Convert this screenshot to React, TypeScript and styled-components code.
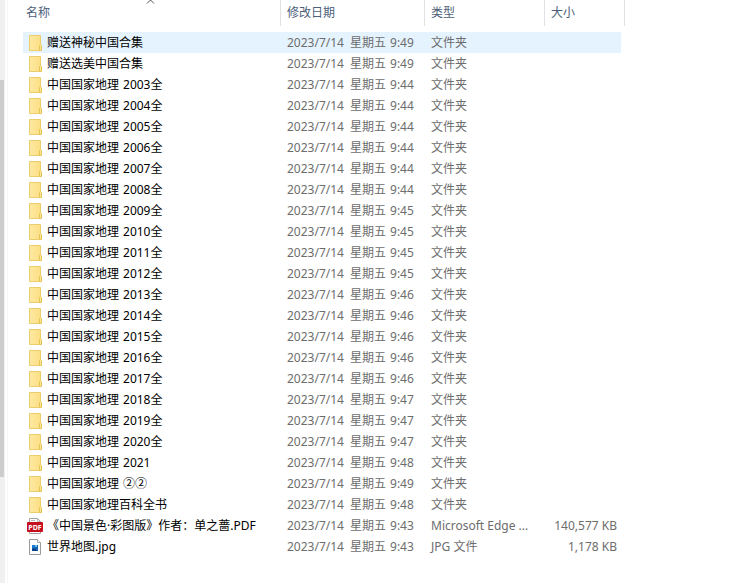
import React from "react";
import styled, { createGlobalStyle } from "styled-components";

const GlobalStyle = createGlobalStyle`
  * { box-sizing: border-box; }
  body {
    margin: 0;
    background: #fff;
    font-family: "Noto Sans", "Noto Sans CJK SC", sans-serif;
    font-size: 12px;
    line-height: 20px;
  }
`;

const Page = styled.div`
  display: flex;
  min-height: 100vh;
  overflow: hidden;
`;

const ScrollTrack = styled.div`
  flex: 0 0 5px;
  display: flex;
  flex-direction: column;
  padding-right: 1px;
  background: #f0f0f0;
`;

const TrackSpace = styled.div<{ $share: number }>`
  flex: ${(p) => p.$share} 0 0;
`;

const ScrollThumb = styled(TrackSpace)`
  background: #cdcdcd;
`;

const FilePane = styled.main`
  flex: 1;
  min-width: 0;
  margin-left: 2px;
  padding-left: 15px;
  border-left: 1px solid #f7f7f7;
`;

const FileTable = styled.table`
  width: 602px;
  table-layout: fixed;
  border-collapse: separate;
  border-spacing: 0;
`;

const Column = styled.col<{ $width: number }>`
  width: ${(p) => p.$width}px;
`;

const HeadCell = styled.th`
  position: relative;
  height: 32px;
  padding: 0;
  vertical-align: top;
  font-weight: 400;
`;

const HeadButton = styled.button<{ $indent: number }>`
  display: block;
  width: 100%;
  height: 26px;
  padding: 0 0 0 ${(p) => p.$indent}px;
  border: 0;
  border-right: 1px solid #e2e2e2;
  background: transparent;
  color: #4c607a;
  font: inherit;
  text-align: left;
`;

const SortMark = styled.svg`
  position: absolute;
  top: 0;
  left: 50%;
  margin-left: -6px;
`;

const Row = styled.tr<{ $active?: boolean }>`
  td {
    background-color: ${(p) => (p.$active ? "#e5f3ff" : "transparent")};
  }
`;

const Cell = styled.td`
  height: 21px;
  padding: 0 0 0 6px;
  color: #6d6d6d;
  white-space: nowrap;
`;

const NameCell = styled(Cell)`
  padding-left: 4px;
  color: #000;
`;

const SizeCell = styled(Cell)`
  padding-right: 4px;
  border-right: 4px solid transparent;
  background-clip: padding-box;
  text-align: right;
`;

const FileName = styled.div`
  display: flex;
  align-items: center;
  gap: 4px;
`;

const NameText = styled.span`
  display: flex;
  gap: 4px;
`;

const DateText = styled.time`
  display: flex;
  gap: 4px;
`;

const DayText = styled.span`
  flex: 0 0 59px;
`;

const FileIcon = styled.svg`
  flex: none;
`;

type Kind = "folder" | "pdf" | "jpg";

function Icon({ kind }: { kind: Kind }) {
  if (kind === "folder") {
    return (
      <FileIcon width="16" height="18" viewBox="0 0 16 18" aria-hidden="true">
        <defs>
          <linearGradient id="folderFill" x1="0" x2="1">
            <stop offset="0" stopColor="#ffe9a2" />
            <stop offset="1" stopColor="#fbdf85" />
          </linearGradient>
        </defs>
        <path d="M2.5 1.5h11v15h-11z" fill="url(#folderFill)" stroke="#ebcd6c" />
        <path d="M12.5 16.5v-5l1-1 1 1v5z" fill="#ffe795" stroke="#e6c353" />
      </FileIcon>
    );
  }
  if (kind === "pdf") {
    return (
      <FileIcon width="16" height="18" viewBox="0 0 16 18" aria-hidden="true">
        <path d="M2.5 1.5h8l3 3v12h-11z" fill="#fff" stroke="#a3a3a3" />
        <path d="M10.5 1.5v3h3M4 3.5h4" fill="none" stroke="#b8b8b8" />
        <rect y="5" width="16" height="10" rx="1" fill="#c50f1f" />
        <text
          x="8"
          y="13"
          textAnchor="middle"
          fontSize="7"
          fontWeight="700"
          fontFamily="Noto Sans, sans-serif"
          fill="#fff"
        >
          PDF
        </text>
      </FileIcon>
    );
  }
  return (
    <FileIcon width="16" height="18" viewBox="0 0 16 18" aria-hidden="true">
      <path d="M2.5 1.5h8l3 3v12h-11z" fill="#fcfcfc" stroke="#9a9a9a" />
      <path d="M10.5 1.5v3h3" fill="#fff" stroke="#ababab" />
      <rect x="5" y="7" width="6" height="6" fill="#1879d0" />
      <path d="M5 13v-2l2-1 4 3z" fill="#0b3f83" />
      <path d="M7 10l3-3h1v5z" fill="#1260ae" />
      <rect x="8" y="7" width="2" height="2" fill="#69c0f0" />
    </FileIcon>
  );
}

interface Entry {
  kind: Kind;
  name: string;
  suffix?: string;
  time: string;
  type: string;
  size?: string;
}

const folder = (name: string, time: string, suffix?: string): Entry => ({
  kind: "folder",
  name,
  suffix,
  time,
  type: "文件夹",
});

const yearTime = (year: number) =>
  year <= 2008 ? "9:44" : year <= 2012 ? "9:45" : year <= 2017 ? "9:46" : "9:47";

const years = Array.from({ length: 18 }, (_, i) => 2003 + i);

const entries: Entry[] = [
  folder("赠送神秘中国合集", "9:49"),
  folder("赠送选美中国合集", "9:49"),
  ...years.map((y) => folder("中国国家地理", yearTime(y), `${y}全`)),
  folder("中国国家地理", "9:48", "2021"),
  folder("中国国家地理", "9:49", "②②"),
  folder("中国国家地理百科全书", "9:48"),
  {
    kind: "pdf",
    name: "《中国景色·彩图版》作者：单之蔷.PDF",
    time: "9:43",
    type: "Microsoft Edge ...",
    size: "140,577 KB",
  },
  { kind: "jpg", name: "世界地图.jpg", time: "9:43", type: "JPG 文件", size: "1,178 KB" },
];

const columns = [
  { label: "名称", width: 258, indent: 3 },
  { label: "修改日期", width: 144, indent: 6 },
  { label: "类型", width: 120, indent: 6 },
  { label: "大小", width: 80, indent: 6 },
];

export default function App() {
  return (
    <>
      <GlobalStyle />
      <Page>
        <ScrollTrack aria-hidden="true">
          <TrackSpace $share={80} />
          <ScrollThumb $share={397} />
          <TrackSpace $share={106} />
        </ScrollTrack>
        <FilePane>
          <FileTable>
            <colgroup>
              {columns.map((c) => (
                <Column key={c.label} $width={c.width} />
              ))}
            </colgroup>
            <thead>
              <tr>
                {columns.map((c, i) => (
                  <HeadCell key={c.label} scope="col" aria-sort={i === 0 ? "ascending" : undefined}>
                    <HeadButton type="button" $indent={c.indent}>
                      {c.label}
                    </HeadButton>
                    {i === 0 && (
                      <SortMark width="9" height="5" viewBox="0 0 9 5" aria-hidden="true">
                        <path d="M1 3.5L4.5 0 8 3.5" fill="none" stroke="#555" />
                      </SortMark>
                    )}
                  </HeadCell>
                ))}
              </tr>
            </thead>
            <tbody>
              {entries.map((e, i) => (
                <Row key={i} $active={i === 0}>
                  <NameCell>
                    <FileName>
                      <Icon kind={e.kind} />
                      <NameText>
                        <span>{e.name}</span>
                        {e.suffix && <span>{e.suffix}</span>}
                      </NameText>
                    </FileName>
                  </NameCell>
                  <Cell>
                    <DateText>
                      <DayText>2023/7/14</DayText>
                      <span>星期五</span>
                      <span>{e.time}</span>
                    </DateText>
                  </Cell>
                  <Cell>{e.type}</Cell>
                  <SizeCell>{e.size}</SizeCell>
                </Row>
              ))}
            </tbody>
          </FileTable>
        </FilePane>
      </Page>
    </>
  );
}
